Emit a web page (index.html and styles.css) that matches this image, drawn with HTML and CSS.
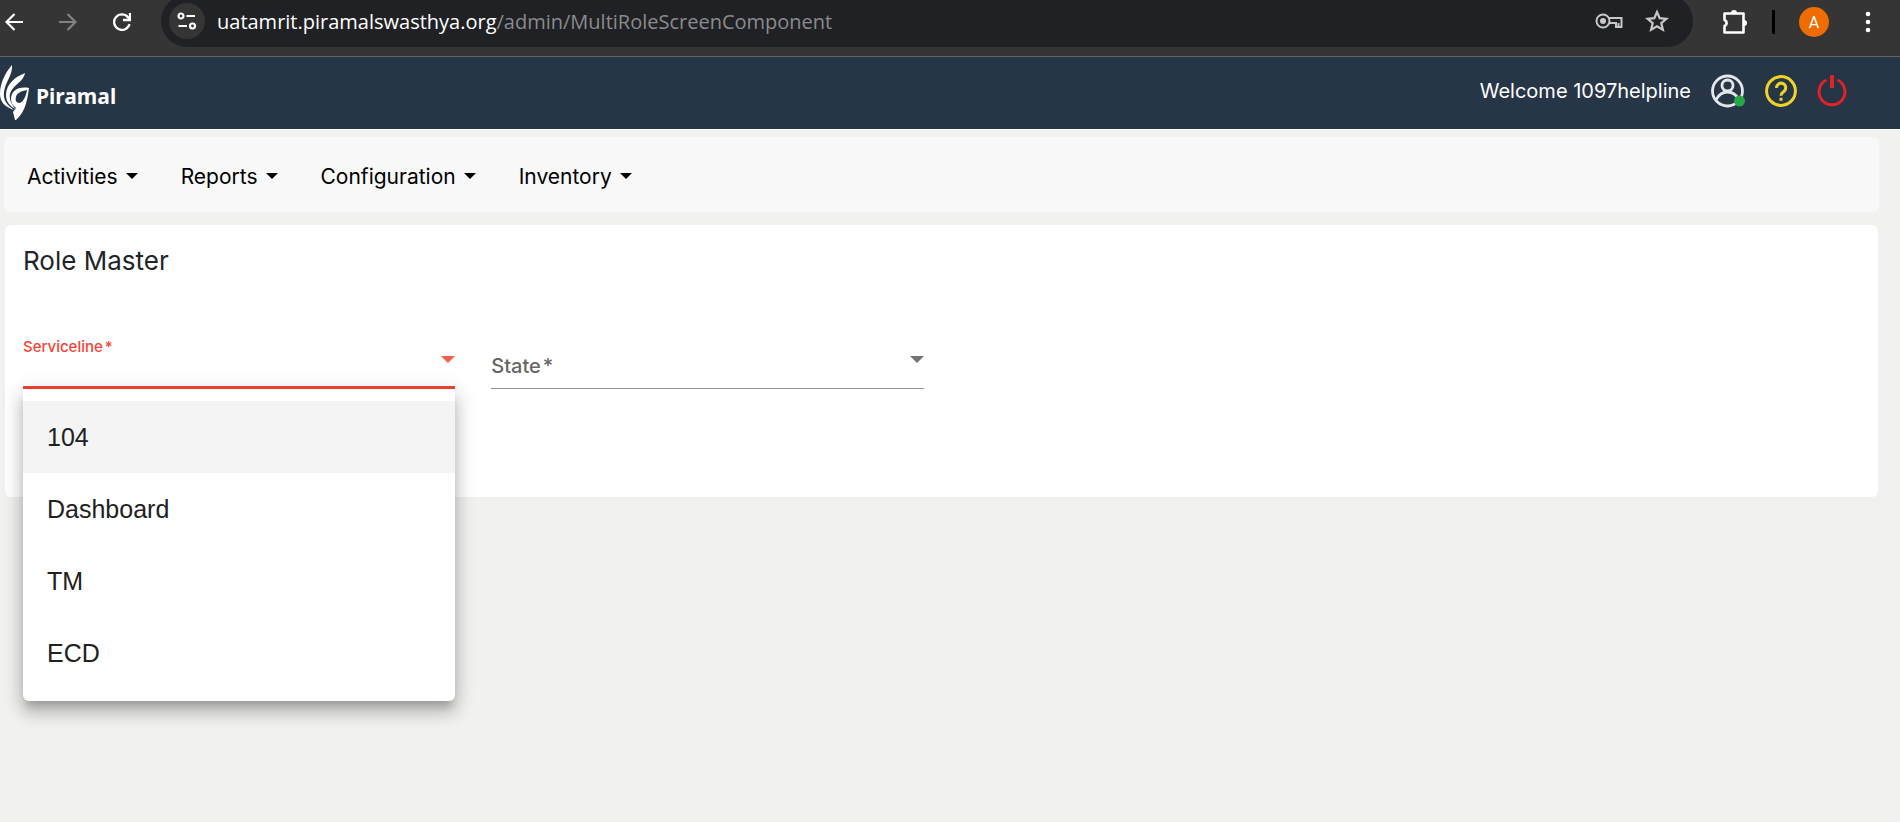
FILE: index.html
```
<!DOCTYPE html>
<html lang="en">

<head>
  <meta charset="UTF-8">
  <meta name="viewport" content="width=device-width, initial-scale=1.0">
  <title>Role Master</title>
  <link rel="stylesheet" href="styles.css">
</head>

<body>

  <div class="browser-bar">
    <div class="browser-nav">
      <button class="icon-btn" aria-label="Back">
        <svg width="18" height="18" viewBox="0 0 18 18" fill="none" stroke="#fff" stroke-width="2.2"><path d="M18 9H1.5M9.5 1L1.5 9l8 8" /></svg>
      </button>
      <button class="icon-btn" aria-label="Forward">
        <svg width="18" height="18" viewBox="0 0 18 18" fill="none" stroke="#828282" stroke-width="2.2"><path d="M0 9h16.5M8.5 1l8 8-8 8" /></svg>
      </button>
      <button class="icon-btn" aria-label="Reload">
        <svg width="18" height="18" viewBox="0 0 18 18" fill="none" stroke="#fff" stroke-width="2.3"><path d="M16.5 11A7.8 7.8 0 1 1 15 4.200L16.5 6.5" /><path d="M17 0v7h-7" /></svg>
      </button>
    </div>
    <div class="address-bar">
      <button class="site-info" aria-label="Site information">
        <svg width="20" height="18" viewBox="0 0 20 18" fill="none" stroke="#fff" stroke-width="2.2"><circle cx="4" cy="4" r="2.5" /><path d="M9.5 4H18M1.5 14H10" /><circle cx="15.5" cy="14" r="2.5" /></svg>
      </button>
      <div class="url">uatamrit.piramalswasthya.org<span class="url-path">/admin/MultiRoleScreenComponent</span></div>
      <button class="icon-btn" aria-label="Passwords">
        <svg width="28" height="16" viewBox="0 0 28 16" fill="none" stroke="#c7c7c7" stroke-width="2"><circle cx="8" cy="8" r="6.5" /><circle cx="8" cy="8" r="3" fill="#c7c7c7" stroke="none" /><path d="M14 5h12.500v9H21v-4h-1v0h-6" /><path d="M23.500 14v-4" /></svg>
      </button>
      <button class="icon-btn" aria-label="Bookmark">
        <svg width="24" height="24" viewBox="0 0 24 24" fill="none" stroke="#c7c7c7" stroke-width="2.2"><path d="M12 3l2.7 6.2 6.7.6-5.1 4.400 1.6 6.6L12 17.300l-5.900 3.5 1.6-6.6-5.100-4.400 6.700-.6z" /></svg>
      </button>
    </div>
    <div class="browser-tools">
      <button class="icon-btn" aria-label="Extensions">
        <svg width="26" height="26" viewBox="0 0 26 26"><path d="M2.500 4.500h19v19h-19v-6.500a3.200 3.200 0 0 0 0-6z" fill="none" stroke="#fff" stroke-width="2.600" stroke-linejoin="round" /><path d="M9 4a3 3 0 0 1 6 0zM22 11a3 3 0 0 1 0 6z" fill="#fff" /></svg>
      </button>
      <span class="divider"></span>
      <button class="avatar">A</button>
      <button class="icon-btn" aria-label="Menu">
        <svg width="6" height="22" viewBox="0 0 6 22" fill="#fff"><circle cx="3" cy="3" r="2.300" /><circle cx="3" cy="11" r="2.300" /><circle cx="3" cy="19" r="2.300" /></svg>
      </button>
    </div>
  </div>

  <header class="header">
    <a class="logo" href="#">
      <svg width="30" height="56" viewBox="0 0 30 56" fill="#fff"><path d="M12 0C6 7 0 17 0 29c0 8 5 13 14 16C7 40 3 35 4 27 5 17 13 10 12 0z" /><path d="M25 8C15 12 6 19 6 30c0 7 4 11 9 14-4-6-6-10-5-15C12 20 24 17 25 8z" /><path fill-rule="evenodd" d="M29 23C18 21 11 26 11 34c0 4 2 7 5 9l-3 4 2 8h1c7-6 11-15 13-32zM27 25c-1 6-3 11-7 13-4 0-5-3-4-6 1-4 5-6 11-7z" /></svg>
      <span>Piramal</span>
    </a>
    <div class="user">
      <span class="welcome">Welcome 1097helpline</span>
      <button class="icon-btn" aria-label="Profile">
        <svg width="34" height="34" viewBox="0 0 34 34" fill="none" stroke="#e4e6ea" stroke-width="2.800"><circle cx="16.500" cy="17" r="15" /><circle cx="16.500" cy="11.500" r="5.500" /><path d="M5 26c3-6 7-8 11.500-8S25 20 28 26" /><circle cx="28.500" cy="27" r="5.500" fill="#28a745" stroke="none" /></svg>
      </button>
      <button class="icon-btn" aria-label="Help">
        <svg width="32" height="32" viewBox="0 0 32 32" fill="none" stroke="#f0d327" stroke-width="3"><circle cx="16" cy="16" r="14.400" /><path d="M11.500 13a4.600 4.600 0 1 1 7.300 3.500C17 17.800 16 18.500 16 20.800" /><path d="M16 22.800v3" /></svg>
      </button>
      <button class="icon-btn" aria-label="Log out">
        <svg width="30" height="32" viewBox="0 0 30 32" fill="none" stroke="#e32227" stroke-width="3"><path d="M9.500 5A13 13 0 1 0 20.500 5" /><path d="M15 0v13" stroke-width="4" /></svg>
      </button>
    </div>
  </header>

  <nav class="menu-bar">
    <button class="menu-item">Activities</button>
    <button class="menu-item">Reports</button>
    <button class="menu-item">Configuration</button>
    <button class="menu-item">Inventory</button>
  </nav>

  <main class="card">
    <h1>Role Master</h1>
    <form class="fields">
      <div class="field active">
        <label for="serviceline">Serviceline<span class="star">*</span></label>
        <select id="serviceline" required></select>
        <div class="options" role="listbox" aria-label="Serviceline">
          <button type="button" class="option selected" role="option">104</button>
          <button type="button" class="option" role="option">Dashboard</button>
          <button type="button" class="option" role="option">TM</button>
          <button type="button" class="option" role="option">ECD</button>
        </div>
      </div>
      <div class="field">
        <label for="state">State<span class="star">*</span></label>
        <select id="state" required></select>
      </div>
    </form>
  </main>

</body>

</html>
```
FILE: styles.css
```
* {
  box-sizing: border-box;
}

body {
  margin: 0;
  min-height: 100vh;
  background-color: #f1f1ef;
  font-family: Inter, "Liberation Sans", sans-serif;
  color: #212529;
}

button {
  padding: 0;
  border: none;
  background: none;
  font: inherit;
  color: inherit;
  cursor: pointer;
}

svg {
  display: block;
}

/* browser toolbar */
.browser-bar {
  display: flex;
  height: 57px;
  padding-bottom: 12px;
  border-bottom: 1px solid #666460;
  background-color: #353535;
  overflow: hidden;
}

.browser-nav,
.browser-tools {
  display: flex;
  align-items: center;
}

.browser-nav {
  gap: 36px;
  padding: 0 30px 0 5px;
}

.browser-tools {
  gap: 24px;
  padding: 0 29px;
}

.address-bar {
  display: flex;
  flex: 1;
  align-items: center;
  gap: 22px;
  height: 52px;
  margin-top: -5px;
  padding: 0 24px 0 8px;
  border-radius: 26px;
  background-color: #202124;
}

.site-info {
  display: flex;
  align-items: center;
  justify-content: center;
  width: 36px;
  height: 36px;
  border-radius: 50%;
  background-color: #353535;
}

.url {
  flex: 1;
  margin-left: -10px;
  font-family: "Open Sans", "Noto Sans", sans-serif;
  font-size: 20px;
  white-space: nowrap;
  color: #fff;
}

.url-path {
  color: #8a8b8d;
}

.divider {
  width: 3px;
  height: 24px;
  background-color: #000;
}

.avatar {
  width: 30px;
  height: 30px;
  margin-right: 12px;
  border-radius: 50%;
  background-color: #ef6c00;
  font-family: Roboto, sans-serif;
  font-size: 16px;
  color: #fff;
}

/* page header */
.header {
  display: flex;
  justify-content: space-between;
  height: 73px;
  padding-right: 53px;
  border-bottom: 1px solid #fff;
  background-color: #263646;
  color: #fff;
}

.logo {
  display: flex;
  align-items: center;
  gap: 6px;
  font-family: "Noto Sans", sans-serif;
  font-size: 21px;
  font-weight: 700;
  color: #fff;
  text-decoration: none;
}

.logo span {
  padding-top: 6px;
}

.user {
  display: flex;
  align-items: center;
  gap: 20px;
  padding-bottom: 4px;
}

.welcome {
  font-size: 20px;
}

/* menu bar */
.menu-bar {
  display: flex;
  align-items: center;
  gap: 43px;
  height: 75px;
  margin: 7px 21px 13px 4px;
  padding: 3px 23px 0;
  border-radius: 6px;
  background-color: #f8f8f8;
}

.menu-item {
  display: flex;
  align-items: center;
  gap: 8px;
  font-size: 21px;
  color: #000;
}

.menu-item::after {
  content: "";
  border-top: 6px solid #000;
  border-left: 6px solid transparent;
  border-right: 6px solid transparent;
}

/* role master */
.card {
  margin: 0 22px 0 5px;
  padding: 18px 18px 108px;
  border-radius: 6px;
  background-color: #fff;
}

h1 {
  margin: 0 0 60px;
  font-size: 26px;
  font-weight: 400;
  line-height: 36px;
}

.fields {
  display: grid;
  grid-template-columns: repeat(4, 1fr);
  gap: 36px;
}

/* label and select share one cell */
.field {
  display: grid;
  position: relative;
  height: 50px;
  border-bottom: 1px solid #949494;
}

.field label,
.field select {
  grid-area: 1 / 1;
}

.field label {
  align-self: end;
  padding-bottom: 8px;
  font-size: 20px;
  font-weight: 500;
  line-height: 28px;
  color: #666;
  pointer-events: none;
}

.star {
  margin-left: 2px;
}

.field select {
  width: 100%;
  border: none;
  outline: none;
  appearance: none;
  background: url("data:image/svg+xml,%3Csvg xmlns='http://www.w3.org/2000/svg' width='14' height='7'%3E%3Cpath d='M0 0h14l-7 7z' fill='%23757575'/%3E%3C/svg%3E") no-repeat right 17px;
}

.field.active {
  border-bottom: 3px solid #f44336;
}

.field.active label {
  align-self: start;
  padding: 0;
  font-size: 15px;
  line-height: 16px;
  color: #f44336;
}

.field.active select {
  background-image: url("data:image/svg+xml,%3Csvg xmlns='http://www.w3.org/2000/svg' width='14' height='7'%3E%3Cpath d='M0 0h14l-7 7z' fill='%23f75d52'/%3E%3C/svg%3E");
}

.options {
  position: absolute;
  top: 50px;
  left: 0;
  right: 0;
  padding: 12px 0;
  border-radius: 0 0 6px 6px;
  background-color: #fff;
  box-shadow: 0 8px 8px -4px rgba(0, 0, 0, 0.2), 0 12px 15px 2px rgba(0, 0, 0, 0.14), 0 4px 21px 3px rgba(0, 0, 0, 0.12);
}

.option {
  display: block;
  width: 100%;
  height: 72px;
  padding: 0 24px;
  font-family: "Liberation Sans", Arial, sans-serif;
  font-size: 25px;
  line-height: 70px;
  text-align: left;
  color: #212121;
}

.option.selected {
  background-color: #f4f4f4;
}
```
